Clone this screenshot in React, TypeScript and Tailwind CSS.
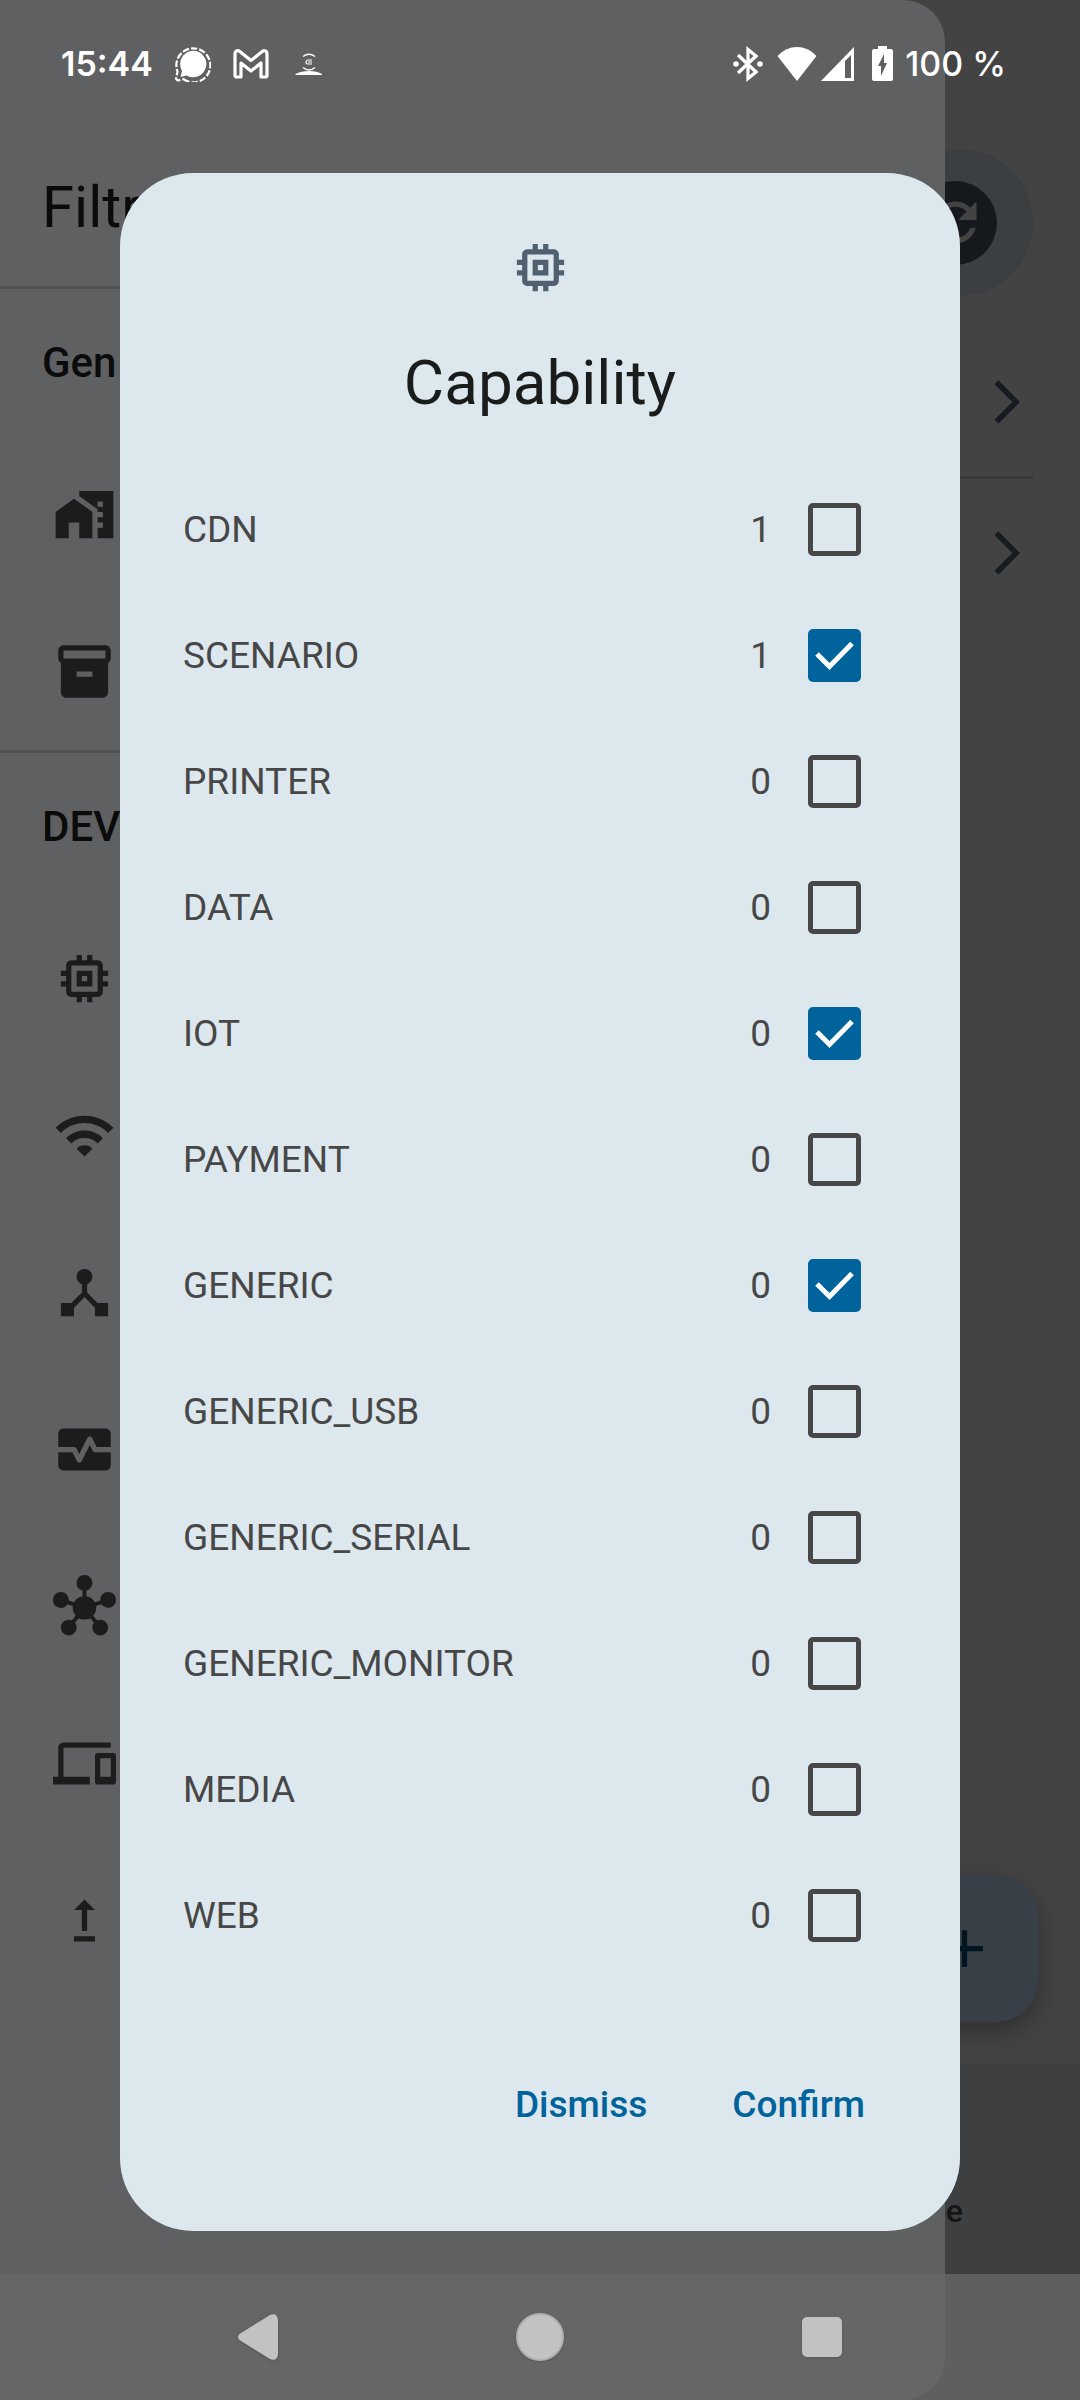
import { useState } from "react"
import type { IconType } from "react-icons"
import {
    MdAdd,
    MdArrowForwardIos,
    MdDeviceHub,
    MdDevices,
    MdHomeWork,
    MdHub,
    MdInventory2,
    MdMemory,
    MdMonitorHeart,
    MdRefresh,
    MdUpgrade,
    MdWifi,
} from "react-icons/md"

const capabilities = [
    { name: "CDN", count: 1, checked: false },
    { name: "SCENARIO", count: 1, checked: true },
    { name: "PRINTER", count: 0, checked: false },
    { name: "DATA", count: 0, checked: false },
    { name: "IOT", count: 0, checked: true },
    { name: "PAYMENT", count: 0, checked: false },
    { name: "GENERIC", count: 0, checked: true },
    { name: "GENERIC_USB", count: 0, checked: false },
    { name: "GENERIC_SERIAL", count: 0, checked: false },
    { name: "GENERIC_MONITOR", count: 0, checked: false },
    { name: "MEDIA", count: 0, checked: false },
    { name: "WEB", count: 0, checked: false },
]

const generalIcons = [MdHomeWork, MdInventory2]
const deviceIcons = [MdMemory, MdWifi, MdDeviceHub, MdMonitorHeart, MdHub, MdDevices, MdUpgrade]

function StatusBar() {
    return (
        <div className="absolute inset-x-0 top-0 z-30 flex h-32 items-center justify-between pl-[61px] pr-[74px] font-['Inter',sans-serif] text-[34px] leading-10 text-white">
            <div className="flex items-center">
                <span className="font-semibold">15:44</span>

                {/* Signal */}
                <svg viewBox="0 0 36 36" className="ml-[22px] size-9" fill="none">
                    <path d="M18 4.800a13.200 13.200 0 1 1-6.500 24.600L5.500 31l1.500-6.200A13.200 13.200 0 0 1 18 4.800z" fill="currentColor" />
                    <path d="M8.500 33.200A17 17 0 1 0 2.500 25.500L1.200 32a2 2 0 0 0 2.300 2.400z" stroke="currentColor" strokeWidth="2.200" strokeDasharray="6.500 2" />
                </svg>

                {/* Gmail */}
                <svg viewBox="0 0 36 30" className="ml-[22px] h-[30px] w-9" fill="none" stroke="currentColor" strokeWidth="3.200" strokeLinejoin="round">
                    <path d="M2 4.500v22a1.500 1.500 0 0 0 1.500 1.500H8V14l10 8 10-8v14h4.500a1.500 1.500 0 0 0 1.500-1.500v-22c0-2.300-2.500-3.600-4.500-2.200L18 11.500 6.500 2.300C4.500.900 2 2.200 2 4.500z" />
                </svg>

                {/* Hotspot app */}
                <svg viewBox="0 0 28 22" className="ml-[26px] h-[22px] w-7" fill="none" stroke="currentColor">
                    <path d="M8 3.500Q14-1 20 3.500M8 14.500q6 5 12 0" strokeWidth="1.400" />
                    <path d="M17 7h-4.500q-1.500 0-1.500 2t1.500 2H17M13 9h4" strokeWidth="1.200" />
                    <path d="M.500 22v-1Q6 18 14 18t13 3v1z" fill="currentColor" stroke="none" />
                </svg>
            </div>

            <div className="flex items-center">
                {/* Bluetooth connected */}
                <svg viewBox="0 0 30 36" className="h-9 w-[30px]" fill="none" stroke="currentColor" strokeWidth="3.300">
                    <path d="M5 9l18 17-8 6.500v-29l8 6.500L5 27" />
                    <circle cx="3" cy="18" r="2.800" fill="currentColor" stroke="none" />
                    <circle cx="27" cy="18" r="2.800" fill="currentColor" stroke="none" />
                </svg>

                {/* Wifi */}
                <svg viewBox="0 0 40 34" className="ml-3.5 h-[34px] w-10" fill="currentColor">
                    <path d="M20 34 .500 9Q9 0 20 0t19.500 9z" />
                </svg>

                {/* Mobile signal */}
                <svg viewBox="0 0 33 34" className="ml-1 h-[34px] w-[33px]" fill="currentColor">
                    <path fillRule="evenodd" d="M33 0v34H0zM30 8l-6 6v17h6z" />
                </svg>

                {/* Battery */}
                <svg viewBox="0 0 21 36" className="ml-[18px] h-9 w-[21px]" fill="currentColor">
                    <path fillRule="evenodd" d="M6 0h9v3h4a2 2 0 0 1 2 2v28a2 2 0 0 1-2 2H2a2 2 0 0 1-2-2V5a2 2 0 0 1 2-2h4zM12 8 6 20h3v10l6-13h-3z" />
                </svg>
                <span className="ml-3 font-medium">100 %</span>
            </div>
        </div>
    )
}

function HomeScreen() {
    return (
        <div className="absolute inset-0 flex flex-col bg-[#434343]">
            <header className="flex justify-end px-[47px] pt-[149px] pb-8">
                <button aria-label="Refresh" className="flex h-[147px] w-[156px] items-center justify-center rounded-full bg-[#3b3f42]">
                    <span className="flex size-[84px] items-center justify-center rounded-full bg-[#15191d]">
                        <MdRefresh className="size-[63px] text-[#434343]" />
                    </span>
                </button>
            </header>

            <div className="flex flex-1 flex-col px-[47px]">
                <button aria-label="Open first entry" className="flex h-[151px] items-center justify-end border-b-3 border-[#383838] text-[#171a20]">
                    <MdArrowForwardIos className="size-[52px]" />
                </button>
                <button aria-label="Open second entry" className="flex h-37 items-center justify-end text-[#171c20]">
                    <MdArrowForwardIos className="size-[52px]" />
                </button>
            </div>

            <div className="flex justify-end p-[42px]">
                <button aria-label="Add" className="flex size-[147px] items-center justify-center rounded-[42px] bg-[#383f47] text-[#001520] shadow-[0_10px_24px_rgba(0,0,0,0.3)]">
                    <MdAdd className="size-[63px]" />
                </button>
            </div>

            <nav className="flex h-[336px] justify-end bg-[#3e3f41] pt-[126px] pr-[117px] text-[32px] font-medium leading-[42px] text-[#151515]">
                <a href="#">e</a>
            </nav>
        </div>
    )
}

function DrawerSection({ title, icons }: { title: string; icons: IconType[] }) {
    return (
        <section className="border-t-3 border-[#515251]">
            <h2 className="flex h-[147px] items-center px-[42px] text-[42px] font-medium text-[#0b0b0b]">{title}</h2>
            {icons.map((Icon, i) => (
                <div key={i} className="flex h-[157px] items-center px-[53px] text-[#1c1c1c]">
                    <Icon className="size-[63px]" />
                </div>
            ))}
        </section>
    )
}

function Drawer() {
    return (
        <aside className="absolute inset-y-0 left-0 w-7/8 rounded-r-[42px] bg-[#5f6062] pt-[170px]">
            <h1 className="px-[42px] pb-[42px] text-[58px] leading-[74px] text-[#0b0b0b]">Filtr</h1>
            <DrawerSection title="Gen" icons={generalIcons} />
            <DrawerSection title="DEV" icons={deviceIcons} />
        </aside>
    )
}

function CapabilityDialog() {
    const [items, setItems] = useState(capabilities)

    const toggle = (name: string) =>
        setItems(items.map((item) => (item.name === name ? { ...item, checked: !item.checked } : item)))

    return (
        <div
            role="dialog"
            aria-labelledby="dialog-title"
            className="relative z-20 w-7/9 rounded-[73px] bg-[#dde8ee] p-[63px]"
        >
            <MdMemory className="mx-auto size-[63px] text-[#4f6070]" />
            <h2 id="dialog-title" className="py-[42px] text-center text-[62px] leading-[84px] text-[#1a1c1b]">
                Capability
            </h2>

            <ul className="text-[37px] text-[#474747]">
                {items.map((item) => (
                    <li key={item.name}>
                        <label className="flex h-[126px] items-center">
                            <span className="flex-1">{item.name}</span>
                            <span>{item.count}</span>
                            <span className="relative mr-9 ml-[37px] size-[53px]">
                                <input
                                    type="checkbox"
                                    checked={item.checked}
                                    onChange={() => toggle(item.name)}
                                    className="block size-full appearance-none rounded-[5px] border-5 border-[#474747] checked:border-[#00639b] checked:bg-[#00639b]"
                                />
                                {item.checked && (
                                    <svg viewBox="0 0 53 53" className="pointer-events-none absolute inset-0" fill="none" stroke="white" strokeWidth="5">
                                        <path d="M9 25l12.500 12.500L44 14.500" />
                                    </svg>
                                )}
                            </span>
                        </label>
                    </li>
                ))}
            </ul>

            <div className="mt-[63px] flex h-[126px] items-center justify-end gap-[21px] text-[37px] font-medium text-[#00639b]">
                <button className="h-[105px] px-8">Dismiss</button>
                <button className="h-[105px] px-8">Confirm</button>
            </div>
        </div>
    )
}

function SystemNav() {
    return (
        <div className="absolute inset-x-0 bottom-0 z-10 flex h-[126px] items-center justify-center gap-[238px] bg-[#666866]/80 text-[#c1c3c2]">
            <button aria-label="Back">
                <svg viewBox="0 0 40 46" className="h-[46px] w-10 drop-shadow-sm" fill="currentColor">
                    <path d="M1.500 20 32 1q7-3 8 5v34q-1 8-8 5L1.500 26q-3-3 0-6z" />
                </svg>
            </button>
            <button aria-label="Home" className="size-12 rounded-full border-2 border-[#b0b2b1] bg-[#c1c3c2] shadow-sm" />
            <button aria-label="Recents" className="size-10 rounded-[5px] bg-[#c1c3c2] shadow-sm" />
        </div>
    )
}

export default function App() {
    return (
        <main className="relative flex min-h-screen items-center justify-center overflow-hidden pt-[3px] font-['Roboto',sans-serif]">
            <HomeScreen />
            <Drawer />
            <SystemNav />
            <CapabilityDialog />
            <StatusBar />
        </main>
    )
}
